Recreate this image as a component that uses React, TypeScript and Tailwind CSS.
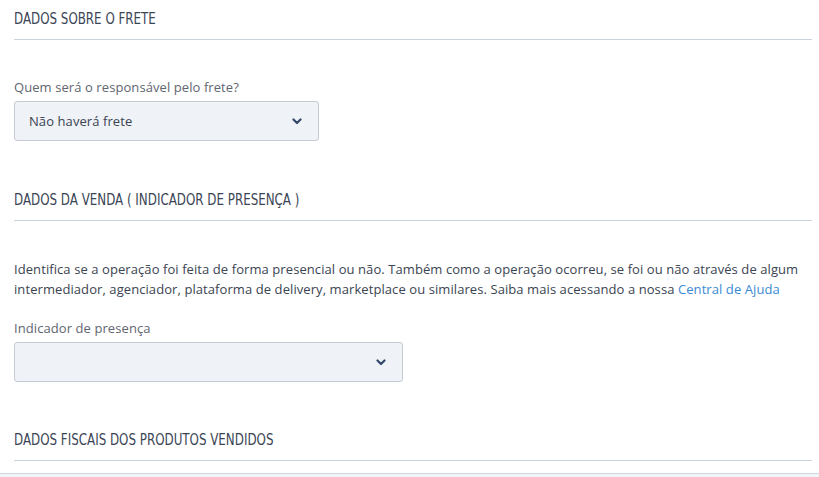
import React from "react";

const Chevron = () => (
  <svg width="10" height="7" viewBox="0 0 10 7" className="shrink-0">
    <path d="M1.5 1.5 L5 5 L8.5 1.5" fill="none" stroke="#34486a" strokeWidth="2.2" strokeLinecap="round" strokeLinejoin="round" />
  </svg>
);

const Heading = ({ children }: { children: React.ReactNode }) => (
  <div className="border-b border-[#c8d3df] pb-[12px] pt-[11px]">
    <h2 className="text-[15px] leading-[16px] text-[#3a4555] tracking-[0px] origin-left scale-x-[0.88] whitespace-nowrap" style={{ fontFamily: '"Liberation Sans Narrow", "DejaVu Sans Condensed", sans-serif' }}>
      {children}
    </h2>
  </div>
);

const Select = ({ value, width }: { value?: string; width: string }) => (
  <div className={`${width} h-[40px] rounded-[3px] border border-[#c6ccd4] bg-[#eff2f7] flex items-center justify-between pl-[14px] pr-[16px]`}>
    <span className="text-[13px] text-[#3b4452] pt-[2px]">{value}</span>
    <Chevron />
  </div>
);

export default function App() {
  return (
    <div className="w-[819px] h-[477px] bg-white overflow-hidden flex flex-col tracking-[0.08px]" style={{ fontFamily: '"Open Sans", sans-serif' }}>
      <div className="pl-[14px] w-[812px] flex flex-col">
        <Heading>DADOS SOBRE O FRETE</Heading>
        <label className="mt-[38px] text-[13px] leading-[18px] text-[#5f6670]">Quem será o responsável pelo frete?</label>
        <div className="mt-[5px]">
          <Select value="Não haverá frete" width="w-[305px]" />
        </div>
        <div className="mt-[40px]">
          <Heading>DADOS DA VENDA ( INDICADOR DE PRESENÇA )</Heading>
        </div>
        <p className="mt-[38px] text-[13px] leading-[20px] text-[#3b4452]">
          Identifica se a operação foi feita de forma presencial ou não. Também como a operação ocorreu, se foi ou não através de algum intermediador, agenciador, plataforma de delivery, marketplace ou similares. Saiba mais acessando a nossa <a className="text-[#3a8ad3]">Central de Ajuda</a>
        </p>
        <label className="mt-[20px] text-[13px] leading-[18px] text-[#5f6670]">Indicador de presença</label>
        <div className="mt-[5px]">
          <Select width="w-[389px]" />
        </div>
        <div className="mt-[39px]">
          <Heading>DADOS FISCAIS DOS PRODUTOS VENDIDOS</Heading>
        </div>
      </div>
      <div className="mt-[12px] border-t border-[#cfd8e2] bg-[#f0f3f8] flex-1" />
    </div>
  );
}
